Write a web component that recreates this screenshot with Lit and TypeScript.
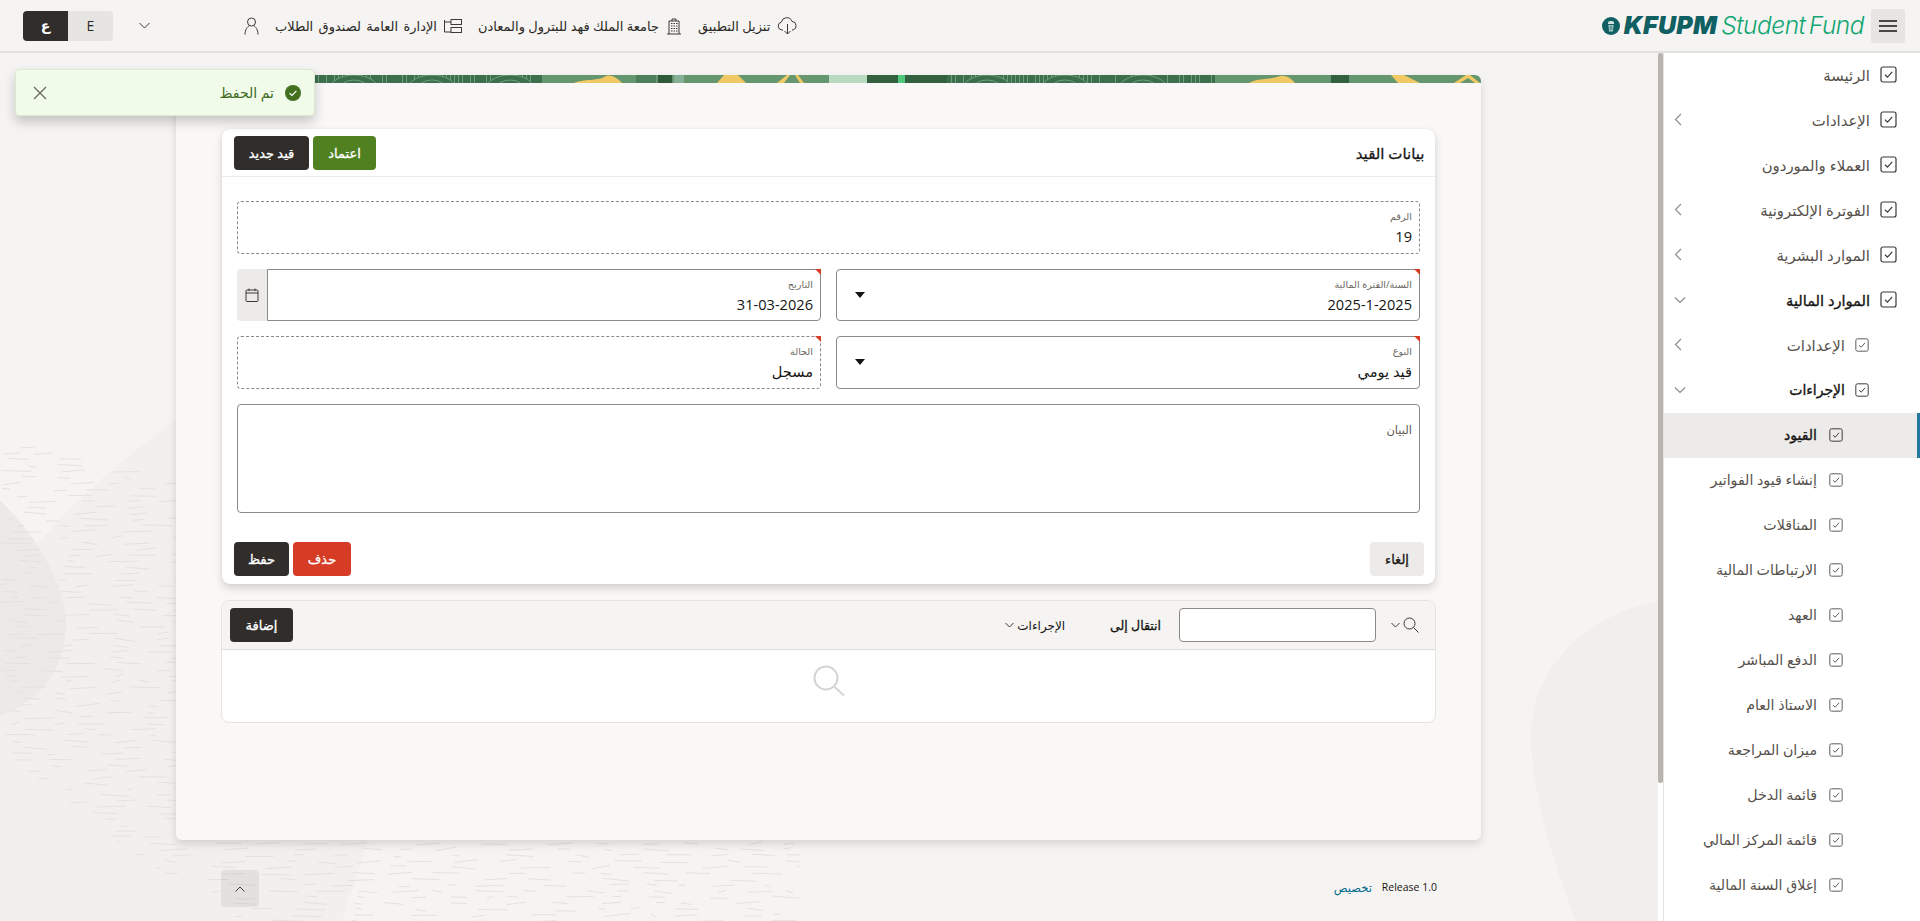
import { LitElement, html, css, svg } from "lit";
import { customElement } from "lit/decorators.js";

type NavItem = { label: string; level: number; chevron?: "side" | "down"; bold?: boolean; active?: boolean };

const NAV: NavItem[] = [
  { label: "الرئيسة", level: 1 },
  { label: "الإعدادات", level: 1, chevron: "side" },
  { label: "العملاء والموردون", level: 1 },
  { label: "الفوترة الإلكترونية", level: 1, chevron: "side" },
  { label: "الموارد البشرية", level: 1, chevron: "side" },
  { label: "الموارد المالية", level: 1, chevron: "down", bold: true },
  { label: "الإعدادات", level: 2, chevron: "side" },
  { label: "الإجراءات", level: 2, chevron: "down", bold: true },
  { label: "القيود", level: 3, bold: true, active: true },
  { label: "إنشاء قيود الفواتير", level: 3 },
  { label: "المناقلات", level: 3 },
  { label: "الارتباطات المالية", level: 3 },
  { label: "العهد", level: 3 },
  { label: "الدفع المباشر", level: 3 },
  { label: "الاستاذ العام", level: 3 },
  { label: "ميزان المراجعة", level: 3 },
  { label: "قائمة الدخل", level: 3 },
  { label: "قائمة المركز المالي", level: 3 },
  { label: "إغلاق السنة المالية", level: 3 },
];

// simple seeded generator so the background texture stays the same every run
function rng(seed: number) {
  let s = seed;
  return () => {
    s = (s * 16807) % 2147483647;
    return s / 2147483647;
  };
}

function bgDashes() {
  const r = rng(4711);
  const out = [];
  for (let y = 440; y < 921; y += 6) {
    let x = r() * 30;
    while (x < 800) {
      const len = 6 + r() * 24;
      const dy = (r() - 0.5) * 2;
      out.push(svg`<line x1=${x} y1=${y + r() * 3} x2=${x + len} y2=${y + dy + r() * 3}></line>`);
      x += len + 12 + r() * 42;
    }
  }
  return out;
}

function stripPattern(from: number, to: number) {
  const r = rng(from + 17);
  const out = [svg`<rect x=${from} width=${to - from} height="8" fill="#3d6f4e"></rect>`];
  for (let x = from; x < to; x += 4) {
    if (r() > 0.35) out.push(svg`<rect x=${x} y="0" width="1" height="8" fill="#6f9c7c"></rect>`);
  }
  for (let x = from + 40; x < to; x += 78) {
    out.push(svg`<ellipse cx=${x} cy="14" rx="24" ry="14" fill="#3d6f4e" stroke="#7fa88b" stroke-width=".8"></ellipse>`);
    out.push(svg`<ellipse cx=${x} cy="14" rx="14" ry="9" fill="none" stroke="#7fa88b" stroke-width=".8"></ellipse>`);
  }
  return out;
}

const checkIcon = (size: number) => html`<svg class="chk" width=${size} height=${size} viewBox="0 0 17 17" fill="none">
  <rect x="1" y="1" width="15" height="15" rx="2" stroke="currentColor" stroke-width="1.2"></rect>
  <path d="M5 8.8 7.5 11.2 12.2 5.8" stroke="currentColor" stroke-width="1.2"></path>
</svg>`;

@customElement("app-root")
export class AppRoot extends LitElement {
  static styles = css`
    :host {
      display: flex;
      flex-direction: column;
      position: relative;
      height: 100vh;
      overflow: hidden;
      direction: rtl;
      font-family: "Open Sans", "Noto Sans", "DejaVu Sans", sans-serif;
      color: #161513;
      background: #f5f4f2;
    }
    .top {
      flex: none;
      height: 51px;
      display: flex;
      align-items: center;
      padding: 0 15px 0 23px;
      background: #f5f4f2;
      border-bottom: 2px solid #e3e2df;
    }
    .burger {
      width: 34px;
      height: 34px;
      border-radius: 3px;
      background: #e6e5e2;
      display: flex;
      align-items: center;
      justify-content: center;
    }
    .logo {
      display: flex;
      align-items: center;
      direction: ltr;
      margin-right: 7px;
      line-height: 1;
    }
    .logo .k {
      font-family: Inter, "Liberation Sans", sans-serif;
      font-weight: 900;
      font-size: 25px;
      font-style: italic;
      color: #0f5f63;
      margin: 0 4px 0 4px;
      letter-spacing: 0.3px;
    }
    .logo .s {
      font-family: Inter, "Open Sans", sans-serif;
      font-weight: 300;
      font-size: 24.5px;
      font-style: italic;
      color: #12a673;
      white-space: pre;
      letter-spacing: -0.5px;
      word-spacing: -3px;
    }
    .actions {
      margin-right: auto;
      display: flex;
      align-items: center;
      font-size: 13px;
      color: #2b2826;
    }
    .act {
      display: flex;
      align-items: center;
      gap: 7px;
      margin-left: 16px;
    }
    .act span {
      white-space: nowrap;
    }
    .act .spread {
      word-spacing: 2px;
    }
    .user {
      margin-left: 94px;
    }
    .langs {
      display: flex;
      margin-right: 26px;
      border-radius: 4px;
      overflow: hidden;
      font-size: 14px;
    }
    .langs div {
      width: 45px;
      height: 30px;
      display: flex;
      align-items: center;
      justify-content: center;
      background: #e6e5e2;
    }
    .langs .on {
      background: #312d2a;
      color: #fff;
      font-weight: 700;
    }

    .body {
      flex: 1;
      min-height: 0;
      display: flex;
    }
    nav {
      flex: none;
      width: 256px;
      background: #fff;
    }
    .row {
      height: 45px;
      display: flex;
      align-items: center;
      gap: 12px;
      font-size: 14.2px;
      color: #55504b;
      padding-left: 10px;
      padding-bottom: 2px;
      box-sizing: border-box;
    }
    .row.l1 {
      padding-right: 23px;
      font-size: 14.9px;
      gap: 10px;
    }
    .row.l2 {
      padding-right: 51px;
      font-size: 14.9px;
      gap: 10px;
    }
    .row.l3 {
      padding-right: 77px;
    }
    .row.bold {
      color: #161513;
      -webkit-text-stroke: 0.35px #161513;
    }
    .row.l1.bold {
      font-size: 14.6px;
    }
    .row.l2.bold {
      font-size: 14px;
    }
    .row.l3.bold {
      font-size: 14px;
    }
    .row.active {
      background: #ecebe9;
      box-shadow: inset -3px 0 0 #227a9c;
    }
    .chk {
      flex: none;
      color: #5e5954;
    }
    .row.l1 .chk,
    .row.bold .chk {
      color: #3d3935;
    }
    .row .chev {
      margin-right: auto;
      color: #8d8984;
    }
    .track {
      flex: none;
      width: 6px;
      box-sizing: border-box;
      background: #fff;
      border-right: 1px solid #e4e3e0;
    }
    .thumb {
      width: 5px;
      height: 730px;
      background: #b9b4ae;
      border-radius: 2px;
    }

    main {
      flex: 1;
      min-width: 0;
      position: relative;
      padding: 22px 177px 0 176px;
      overflow: hidden;
    }
    .decor {
      position: absolute;
      inset: 0;
      width: 100%;
      height: 100%;
    }
    .panel {
      position: relative;
      height: 765px;
      box-sizing: border-box;
      background: #f9f8f6;
      border-radius: 6px;
      box-shadow: 0 4px 9px rgba(0, 0, 0, 0.13);
      padding: 0 46px;
      overflow: hidden;
    }
    .strip {
      display: block;
      width: calc(100% + 92px);
      height: 8px;
      margin: 0 -46px 46px;
    }
    .card {
      background: #fff;
      border-radius: 8px;
      box-shadow: 0 4px 8px rgba(0, 0, 0, 0.16), 0 0 1px rgba(0, 0, 0, 0.12);
    }
    .card-head {
      height: 47px;
      box-sizing: content-box;
      display: flex;
      align-items: center;
      justify-content: space-between;
      padding: 0 10.5px 0 12px;
      border-bottom: 1px solid #ecebe9;
    }
    .card-head h2 {
      margin: 0;
      font-size: 15px;
      font-weight: 400;
      -webkit-text-stroke: 0.3px #161513;
    }
    .btns {
      display: flex;
      gap: 4px;
    }
    .btn {
      height: 34px;
      display: flex;
      align-items: center;
      justify-content: center;
      border-radius: 4px;
      font-size: 13px;
      font-weight: 400;
      -webkit-text-stroke: 0.3px currentColor;
      color: #fff;
      background: #312d2a;
      box-sizing: border-box;
    }
    .btn.green {
      background: #508120;
    }
    .btn.red {
      background: #d63b25;
    }
    .btn.plain {
      background: #ecebe9;
      color: #161513;
    }
    .form {
      display: grid;
      grid-template-columns: 1fr 1fr;
      gap: 15px;
      padding: 24px 15px 0;
    }
    .field {
      position: relative;
      height: 52.5px;
      display: flex;
      align-items: flex-start;
      box-sizing: border-box;
      border: 1px solid #8c8985;
      border-radius: 4px;
      padding: 0 7px 0 18px;
      background: #fff;
    }
    .field.wide {
      grid-column: 1 / -1;
    }
    .field.ro {
      border: 1px dashed #8c8985;
    }
    .field.req::after {
      content: "";
      position: absolute;
      top: -1px;
      right: -1px;
      border-style: solid;
      border-width: 0 6px 6px 0;
      border-color: transparent #d63b25 transparent transparent;
    }
    .field .txt {
      flex: 1;
      min-width: 0;
    }
    .field label {
      display: block;
      margin-top: 8px;
      font-size: 9.7px;
      line-height: 14px;
      color: #6b6762;
    }
    .field .val {
      font-size: 14.6px;
      line-height: 20px;
      margin-top: 2px;
      color: #161513;
    }
    .caret {
      align-self: center;
      width: 0;
      height: 0;
      border-style: solid;
      border-width: 6px 5.5px 0;
      border-color: #161513 transparent transparent;
    }
    .date {
      display: flex;
    }
    .date .field {
      flex: 1;
      border-radius: 0 4px 4px 0;
    }
    .addon {
      flex: none;
      width: 30px;
      background: #ecebe9;
      border-radius: 4px 0 0 4px;
      display: flex;
      align-items: center;
      justify-content: center;
    }
    .area {
      grid-column: 1 / -1;
      height: 109px;
      box-sizing: border-box;
      border: 1px solid #8c8985;
      border-radius: 4px;
      padding: 17px 7px 0;
      font-size: 11.5px;
      line-height: 16px;
      color: #5e5954;
    }
    .card-foot {
      display: flex;
      justify-content: space-between;
      padding: 29.5px 11px 8px 12px;
    }

    .grid {
      margin: 16px -1px 0;
      height: 123px;
      box-sizing: border-box;
      background: #fff;
      border: 1px solid #e4e3e0;
      border-radius: 8px;
      overflow: hidden;
    }
    .bar {
      height: 49px;
      box-sizing: border-box;
      display: flex;
      align-items: center;
      padding: 0 16px 0 8px;
      background: #f5f4f2;
      border-bottom: 1px solid #dfdedb;
      font-size: 12px;
    }
    .bar .find {
      display: flex;
      align-items: center;
      gap: 3px;
    }
    .bar .box {
      width: 197px;
      height: 34px;
      box-sizing: border-box;
      margin-right: 15px;
      background: #fff;
      border: 1px solid #8c8985;
      border-radius: 4px;
    }
    .bar .go {
      margin-right: 18px;
      font-size: 12.5px;
      -webkit-text-stroke: 0.3px #161513;
      white-space: nowrap;
    }
    .bar .acts {
      margin-right: 45px;
      display: flex;
      align-items: center;
      gap: 3px;
      white-space: nowrap;
    }
    .bar .btn {
      margin-right: auto;
      width: 63px;
    }
    .empty {
      display: flex;
      justify-content: center;
      padding-top: 15px;
    }

    .foot {
      display: flex;
      align-items: center;
      justify-content: space-between;
      position: relative;
      margin: 30px 44px 0 45px;
      font-size: 10.5px;
    }
    .foot .info {
      display: flex;
      align-items: center;
      gap: 10px;
      margin-bottom: 3px;
    }
    .foot a {
      color: #00688c;
      font-size: 11.5px;
    }
    .up {
      width: 38px;
      height: 37px;
      border-radius: 4px;
      background: rgba(0, 0, 0, 0.06);
      display: flex;
      align-items: center;
      justify-content: center;
    }

    .toast {
      position: absolute;
      top: 69px;
      left: 15px;
      width: 300px;
      height: 47px;
      box-sizing: border-box;
      display: flex;
      align-items: center;
      gap: 11px;
      padding: 0 13px 0 17px;
      background: #f1fbea;
      border: 1px solid #dde8d3;
      border-radius: 4px;
      box-shadow: 0 6px 12px rgba(0, 0, 0, 0.2);
      color: #3f6b1e;
      font-size: 14px;
    }
    .toast .x {
      margin-right: auto;
      display: flex;
    }
  `;

  private field(label: string, value: string, opts: { ro?: boolean; req?: boolean; sel?: boolean; wide?: boolean } = {}) {
    const cls = ["field", opts.ro ? "ro" : "", opts.req ? "req" : "", opts.wide ? "wide" : ""].join(" ");
    return html`<div class=${cls}>
      <div class="txt"><label>${label}</label><div class="val">${value}</div></div>
      ${opts.sel ? html`<span class="caret"></span>` : ""}
    </div>`;
  }

  private renderNav() {
    return NAV.map(
      (n) => html`<div class="row l${n.level} ${n.bold ? "bold" : ""} ${n.active ? "active" : ""}">
        ${checkIcon(n.level === 1 ? 17 : 14)}
        <span>${n.label}</span>
        ${n.chevron === "side"
          ? html`<svg class="chev" width="8" height="13" viewBox="0 0 8 13" fill="none"><path d="M7 1 1.5 6.5 7 12" stroke="currentColor" stroke-width="1.1"></path></svg>`
          : n.chevron === "down"
          ? html`<svg class="chev" width="12" height="8" viewBox="0 0 12 8" fill="none"><path d="M1 1.5 6 6.5 11 1.5" stroke="currentColor" stroke-width="1.1"></path></svg>`
          : ""}
      </div>`
    );
  }

  private renderStrip() {
    return html`<svg class="strip" viewBox="176 0 1305 8" preserveAspectRatio="none">
      <rect x="176" width="1305" height="8" fill="#66966f"></rect>
      ${stripPattern(314, 542)}
      <path d="M574 8 C582 4 600 6 606 1 C612 -1 618 4 622 8Z" fill="#f0c964"></path>
      <rect x="636" width="20" height="8" fill="#4d7f5b"></rect>
      <rect x="658" width="14" height="8" fill="#2f5a3a"></rect>
      <rect x="674" width="10" height="8" fill="#86b095"></rect>
      <path d="M717 8 L724 0 L738 0 L746 8Z" fill="#f0c964"></path>
      <path d="M777 8 L787 0 L790 0 L784 8Z M795 0 L798 0 L804 8 L800 8Z" fill="#f0c964"></path>
      <rect x="829" width="38" height="8" fill="#b7dac1"></rect>
      <rect x="867" width="31" height="8" fill="#33603e"></rect>
      <rect x="898" width="7" height="8" fill="#4fc77c"></rect>
      <rect x="905" width="42" height="8" fill="#33603e"></rect>
      ${stripPattern(947, 1215)}
      <path d="M1249 8 C1258 3 1270 5 1280 1 C1288 0 1292 5 1295 8Z" fill="#f0c964"></path>
      <rect x="1331" width="18" height="8" fill="#33603e"></rect>
      <path d="M1391 0 L1404 0 L1420 8 L1398 8Z" fill="#f0c964"></path>
      <path d="M1454 8 L1466 0 L1470 0 L1480 8 L1475 8 L1468 3 L1460 8Z" fill="#f0c964"></path>
    </svg>`;
  }

  render() {
    return html`
      <header class="top">
        <div class="burger">
          <svg width="18" height="12" viewBox="0 0 18 12"><path d="M0 1h18M0 6h18M0 11h18" stroke="#161513" stroke-width="1.5"></path></svg>
        </div>
        <div class="logo">
          <svg width="18" height="18" viewBox="0 0 18 18">
            <circle cx="9" cy="9" r="9" fill="#0f5f63"></circle>
            <path d="M6 5.5C6 3.5 12 3.5 12 5.5V7H6Z" fill="#cfe3e0"></path>
            <path d="M6.5 8h5l-.6 6.5H7.1Z" fill="#cfe3e0"></path>
            <path d="M8.3 8v6.5M9.8 8v6.5M6.7 10h4.6M6.9 12h4.2" stroke="#0f5f63" stroke-width=".5"></path>
          </svg>
          <span class="k">KFUPM</span>
          <span class="s">Student Fund</span>
        </div>
        <div class="actions">
          <div class="act">
            <svg width="21" height="18" viewBox="0 0 21 18" fill="none" stroke="#3d3935" stroke-width="1">
              <path d="M6 13H5a4 4 0 0 1-.6-7.9A5.5 5.5 0 0 1 15 4.4 4.4 4.4 0 0 1 16 13h-1"></path>
              <path d="M10.5 7v10M7.5 14l3 3 3-3"></path>
            </svg>
            <span>تنزيل التطبيق</span>
          </div>
          <div class="act">
            <svg width="16" height="18" viewBox="0 0 16 18" fill="none" stroke="#3d3935" stroke-width="1">
              <path d="M3 17V4h10v13M1 17h14M6 4V2h4v2"></path>
              <path d="M5 6.5h1.5M7.5 6.5H9M10 6.5h1.5M5 9h1.5M7.5 9H9M10 9h1.5M5 11.5h1.5M7.5 11.5H9M10 11.5h1.5M5 14h1.5M7.5 14H9M10 14h1.5"></path>
            </svg>
            <span>جامعة الملك فهد للبترول والمعادن</span>
          </div>
          <div class="act">
            <svg width="18" height="14" viewBox="0 0 18 14" fill="none" stroke="#3d3935" stroke-width="1">
              <rect x="7" y=".5" width="10.5" height="5"></rect>
              <rect x="7" y="8.5" width="10.5" height="5"></rect>
              <path d="M.5 1v12h6.5M.5 3H7"></path>
            </svg>
            <span class="spread">الإدارة العامة لصندوق الطلاب</span>
          </div>
          <svg class="user" width="15" height="18" viewBox="0 0 15 18" fill="none" stroke="#3d3935" stroke-width="1">
            <circle cx="7.5" cy="5" r="4"></circle>
            <path d="M1 17.5c0-5 2.5-8 4.5-8.8M14 17.5c0-5-2.5-8-4.5-8.8"></path>
          </svg>
          <svg width="11" height="7" viewBox="0 0 11 7" fill="none" stroke="#3d3935" stroke-width="1"><path d="M.5 1 5.5 6 10.5 1"></path></svg>
          <div class="langs"><div>E</div><div class="on">ع</div></div>
        </div>
      </header>

      <div class="body">
        <nav>${this.renderNav()}</nav>
        <div class="track"><div class="thumb"></div></div>
        <main>
          <svg class="decor" viewBox="0 53 1658 868" preserveAspectRatio="none">
            <defs>
              <clipPath id="dashes">
                <path d="M0 455 L30 443 L160 477 L800 700 L800 921 L240 921 L217 900 L177 880 L127 850 L83 813 L50 787 L17 763 L0 733Z"></path>
              </clipPath>
            </defs>
            <path d="M176 420 C120 460 60 510 0 590 L0 921 L342 921 L368 840 L176 840Z" fill="#f1f0ee"></path>
            <path d="M0 500 C40 540 68 590 66 630 C62 680 30 705 0 716Z" fill="#ebeae8"></path>
            <path d="M1658 601 C1585 615 1531 670 1531 735 C1531 790 1555 870 1576 921 L1658 921Z" fill="#f0efed"></path>
            <g clip-path="url(#dashes)" stroke="#e3e2df" stroke-width="1">${bgDashes()}</g>
          </svg>
          <section class="panel">
            ${this.renderStrip()}
            <div class="card">
              <div class="card-head">
                <h2>بيانات القيد</h2>
                <div class="btns">
                  <div class="btn green" style="width:63px">اعتماد</div>
                  <div class="btn" style="width:75px">قيد جديد</div>
                </div>
              </div>
              <div class="form">
                ${this.field("الرقم", "19", { ro: true, wide: true })}
                ${this.field("السنة/الفترة المالية", "2025-1-2025", { req: true, sel: true })}
                <div class="date">
                  ${this.field("التاريخ", "31-03-2026", { req: true })}
                  <div class="addon">
                    <svg width="14" height="14" viewBox="0 0 14 14" fill="none" stroke="#3d3935" stroke-width="1">
                      <rect x="1" y="2" width="12" height="11.5" rx="1"></rect>
                      <path d="M1 5h12M4 .5V3M10 .5V3"></path>
                    </svg>
                  </div>
                </div>
                ${this.field("النوع", "قيد يومي", { req: true, sel: true })}
                ${this.field("الحالة", "مسجل", { ro: true, req: true })}
                <div class="area">البيان</div>
              </div>
              <div class="card-foot">
                <div class="btn plain" style="width:54px">إلغاء</div>
                <div class="btns">
                  <div class="btn red" style="width:58px">حذف</div>
                  <div class="btn" style="width:55px">حفظ</div>
                </div>
              </div>
            </div>
            <div class="grid">
              <div class="bar">
                <div class="find">
                  <svg width="16" height="16" viewBox="0 0 16 16" fill="none" stroke="#3d3935" stroke-width="1"><circle cx="6.5" cy="6.5" r="5.5"></circle><path d="M10.5 10.5 15.5 15.5"></path></svg>
                  <svg width="9" height="6" viewBox="0 0 9 6" fill="none" stroke="#3d3935" stroke-width="1"><path d="M.5 1 4.5 5 8.5 1"></path></svg>
                </div>
                <div class="box"></div>
                <span class="go">انتقال إلى</span>
                <div class="acts">
                  <span>الإجراءات</span>
                  <svg width="9" height="6" viewBox="0 0 9 6" fill="none" stroke="#3d3935" stroke-width="1"><path d="M.5 1 4.5 5 8.5 1"></path></svg>
                </div>
                <div class="btn">إضافة</div>
              </div>
              <div class="empty">
                <svg width="32" height="31" viewBox="0 0 32 31" fill="none" stroke="#d4d4d4" stroke-width="2"><circle cx="13" cy="13" r="11.5"></circle><path d="M21 21.5 31 30.5"></path></svg>
              </div>
            </div>
          </section>
          <div class="foot">
            <div class="info"><span>Release 1.0</span><a>تخصيص</a></div>
            <div class="up">
              <svg width="10" height="6" viewBox="0 0 10 6" fill="none" stroke="#3d3935" stroke-width="1"><path d="M.5 5.5 5 1 9.5 5.5"></path></svg>
            </div>
          </div>
        </main>
      </div>

      <div class="toast">
        <svg width="16" height="16" viewBox="0 0 16 16"><circle cx="8" cy="8" r="8" fill="#43701f"></circle><path d="M4.6 8.2 7 10.5 11.4 5.8" fill="none" stroke="#fff" stroke-width="1.2"></path></svg>
        <span>تم الحفظ</span>
        <div class="x">
          <svg width="14" height="14" viewBox="0 0 14 14" fill="none" stroke="#6b6762" stroke-width="1.3"><path d="M1 1 13 13M13 1 1 13"></path></svg>
        </div>
      </div>
    `;
  }
}
